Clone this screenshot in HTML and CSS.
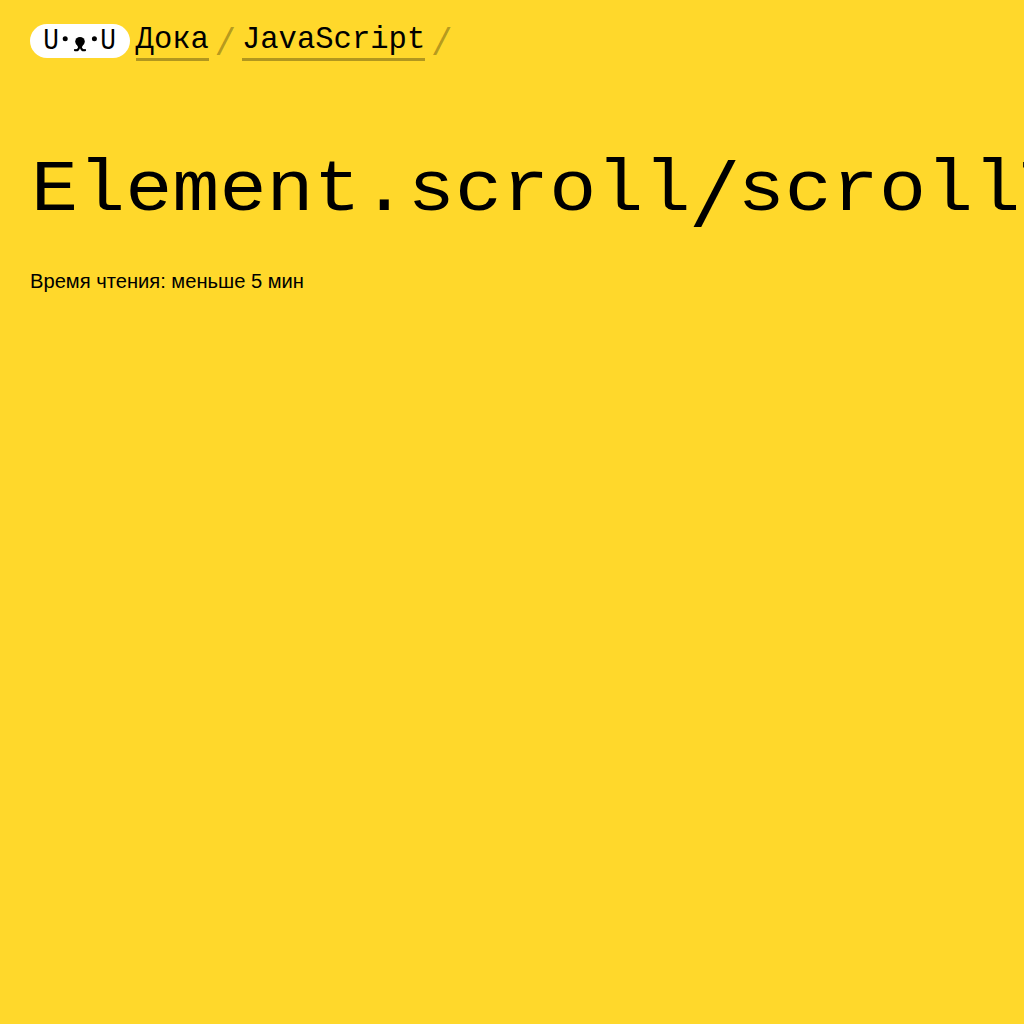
FILE: index.html
```html
<!DOCTYPE html>
<html lang="ru">
<head>
<meta charset="utf-8">
<title>Element.scroll/scrollTo()</title>
<link rel="stylesheet" href="styles.css">
</head>
<body>
<header class="header">
  <nav class="breadcrumbs">
    <a class="logo" href="#" aria-label="Дока">
      <span class="ear">U</span>
      <svg class="muzzle" width="36" height="22" viewBox="0 0 36 22">
        <circle cx="3.2" cy="8.7" r="2.5"/>
        <circle cx="32.4" cy="8.7" r="2.5"/>
        <ellipse cx="18" cy="11.5" rx="4.8" ry="4.6"/>
        <path d="M14.500 14h7l-2 4h-3z"/>
        <path class="mouth" d="M17.300 16c0 3-1.500 4.600-4.300 4.200M18.700 16c0 3 1.500 4.600 4.300 4.200"/>
      </svg>
      <span class="ear">U</span>
    </a>
    <a class="crumb" href="#">Дока</a>
    <span class="separator">/</span>
    <a class="crumb" href="#">JavaScript</a>
    <span class="separator">/</span>
  </nav>
</header>
<main class="article">
  <h1 class="title">Element.scroll<span class="title-slash">/</span>scrollTo()</h1>
  <p class="reading-time">Время чтения: меньше 5 мин</p>
</main>
</body>
</html>
```
FILE: styles.css
```css
* { box-sizing: border-box; }
body {
  margin: 0;
  min-height: 100vh;
  overflow: hidden;
  background: #ffd82b;
  color: #000;
  font-family: "Liberation Sans", Arial, sans-serif;
}
.header { padding: 24px 30px 0; }
.breadcrumbs {
  display: flex;
  align-items: flex-start;
  height: 38px;
  font: 30.55px/32px "Liberation Mono", monospace;
}
.logo {
  display: flex;
  align-items: center;
  justify-content: center;
  width: 100px;
  height: 34px;
  margin-right: 5.6px;
  border-radius: 17px;
  background: #fff;
  color: #000;
  text-decoration: none;
}
.ear {
  width: 17px;
  font-size: 29px;
  line-height: 34px;
  transform: translate(-0.5px, 1px) scaleX(0.9);
}
.muzzle {
  margin: 0 2px;
}
.mouth {
  fill: none;
  stroke: #000;
  stroke-width: 2.2;
  stroke-linecap: round;
}
.crumb {
  height: 37px;
  border-bottom: 3px solid rgba(0, 0, 0, 0.3);
  color: #000;
  text-decoration: none;
}
.separator {
  width: 33px;
  color: rgba(0, 0, 0, 0.3);
  font-size: 36px;
  line-height: 37px;
  text-align: center;
  transform: translateY(2px) scaleY(1.08);
}
.article { padding: 86px 30px 0; }
.title {
  margin: 0;
  font: 400 78.5px/86px "Liberation Mono", monospace;
  white-space: nowrap;
  transform: translate(1px, -1px) scaleY(0.93);
  transform-origin: 0 64px;
}
.title-slash {
  display: inline-block;
  transform: translateY(12px) scale(1.1, 1.25);
}
.reading-time {
  margin: 35px 0 0;
  font-size: 20.15px;
  line-height: 24px;
}
```
